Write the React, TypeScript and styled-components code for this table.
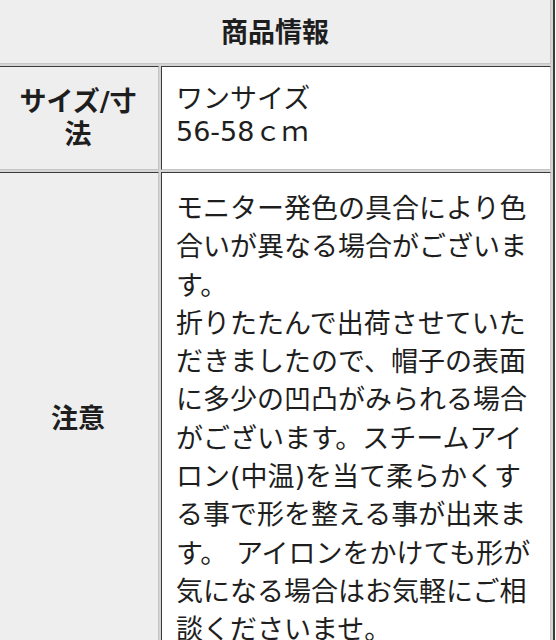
import styled, { createGlobalStyle } from "styled-components";

const GlobalStyle = createGlobalStyle`
  html, body {
    margin: 0;
    padding: 0;
    background: #ffffff;
    overflow: hidden;
  }
  body {
    font-family: "DejaVu Sans", "Noto Sans CJK JP", sans-serif;
    color: #1e1e1e;
  }
`;

const Page = styled.div`
  margin: -7px 0 0 -5px;
`;

const Spec = styled.table`
  width: 560px;
  table-layout: fixed;
  border-collapse: separate;
  border-spacing: 2px;
  background: #d4d4d4;
  border: 2px solid;
  border-color: #d8d8d8 #3c3c3c #3c3c3c #d8d8d8;
  font-size: 27px;
`;

const Column = styled.col<{ $width?: number }>`
  width: ${(p) => (p.$width ? `${p.$width}px` : "auto")};
`;

const Cell = styled.td`
  box-sizing: border-box;
  border: 1px solid;
  border-color: #3a3a3a #c6c6c6 #c6c6c6 #3a3a3a;
  line-height: 33px;
  vertical-align: middle;
`;

const Title = styled(Cell).attrs({ as: "th" })`
  background: #eeeeee;
  font-weight: bold;
  text-align: center;
  padding: 18px 12px 14px;
`;

const Label = styled(Cell).attrs({ as: "th" })`
  background: #eeeeee;
  font-weight: bold;
  text-align: center;
  padding: 18px 9px 18px 7px;
`;

const Value = styled(Cell)<{ $long?: boolean }>`
  background: #ffffff;
  text-align: left;
  padding: ${(p) => (p.$long ? "17px 13px 14px 14px" : "14px 13px 20px 14px")};
  line-height: ${(p) => (p.$long ? "38.3px" : "33px")};
`;

export default function App() {
  return (
    <>
      <GlobalStyle />
      <Page>
        <Spec>
          <colgroup>
            <Column $width={160} />
            <Column />
          </colgroup>
          <tbody>
            <tr>
              <Title colSpan={2}>商品情報</Title>
            </tr>
            <tr>
              <Label>サイズ/寸法</Label>
              <Value>
                ワンサイズ
                <br />
                56-58ｃｍ
              </Value>
            </tr>
            <tr>
              <Label>注意</Label>
              <Value $long>
                モニター発色の具合により色合いが異なる場合がございます。
                <br />
                折りたたんで出荷させていただきましたので、帽子の表面に多少の凹凸がみられる場合がございます。スチームアイロン(中温)を当て柔らかくする事で形を整える事が出来ます。 アイロンをかけても形が気になる場合はお気軽にご相談くださいませ。
              </Value>
            </tr>
          </tbody>
        </Spec>
      </Page>
    </>
  );
}
